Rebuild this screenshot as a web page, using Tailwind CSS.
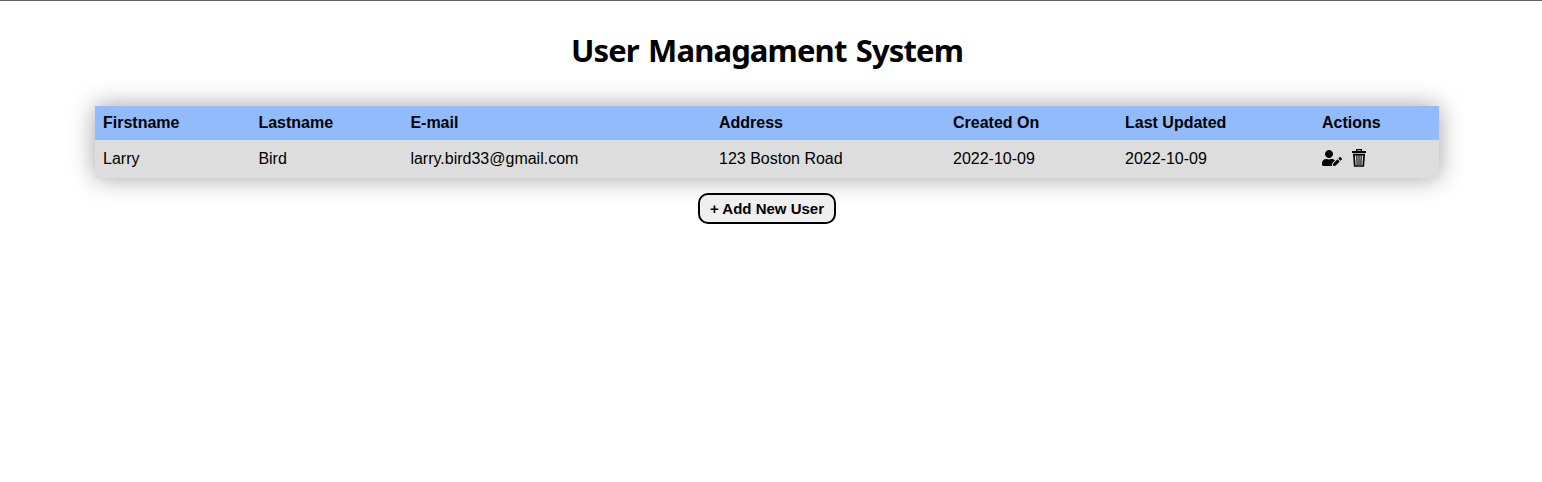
<!DOCTYPE html>
<html lang="en">
<head>
<meta charset="utf-8">
<title>User Managament System</title>
<script src="https://cdn.jsdelivr.net/npm/@tailwindcss/browser@4"></script>
</head>
<body class="bg-white text-black font-['Liberation_Sans',Arial,sans-serif] border-t border-[#606065] h-[482px] overflow-hidden">
<main class="w-[1344px] ml-[95px] flex flex-col items-center">
<h1 class="mt-[28px] h-[44px] leading-[43px] text-[31px] tracking-[-0.86px] [word-spacing:2px] font-bold font-['Noto_Sans',sans-serif] whitespace-nowrap">User Managament System</h1>
<table class="mt-[33px] w-[1344px] table-fixed border-collapse text-left text-base shadow-[0_0_25px_rgba(0,0,0,0.38)]">
<colgroup><col class="w-[155.400px]"><col class="w-[152px]"><col class="w-[308.600px]"><col class="w-[234px]"><col class="w-[172px]"><col class="w-[197px]"><col class="w-[125px]"></colgroup>
<thead><tr class="h-[34px] bg-[#91bbfa]">
<th class="px-2 py-0">Firstname</th><th class="px-2 py-0">Lastname</th><th class="px-2 py-0">E-mail</th><th class="px-2 py-0">Address</th><th class="px-2 py-0">Created On</th><th class="px-2 py-0">Last Updated</th><th class="px-2 py-0">Actions</th></tr></thead>
<tbody><tr class="h-[38px] bg-[#dddddd]">
<td class="px-2 py-0">Larry</td><td class="px-2 py-0">Bird</td><td class="px-2 py-0">larry.bird33@gmail.com</td><td class="px-2 py-0">123 Boston Road</td><td class="px-2 py-0">2022-10-09</td><td class="px-2 py-0">2022-10-09</td>
<td class="px-2 py-0"><div class="flex items-center gap-[10px] pb-[2px]">
<svg class="w-5 h-4" viewBox="0 0 640 512" fill="currentColor"><path d="M224 256c70.700 0 128-57.300 128-128S294.700 0 224 0 96 57.300 96 128s57.300 128 128 128zm89.600 32h-16.700c-22.200 10.200-46.900 16-72.900 16s-50.600-5.800-72.900-16h-16.700C60.200 288 0 348.200 0 422.400V464c0 26.500 21.500 48 48 48h274.900c-2.400-6.800-3.400-14-2.600-21.300l6.800-60.900 1.200-11.100 7.900-7.900 77.300-77.300c-24.500-27.700-60-45.500-99.900-45.500zm45.300 145.300l-6.800 61c-1.100 10.200 7.500 18.800 17.600 17.600l60.900-6.800 137.900-137.900-71.700-71.700-137.900 137.800zM633 268.900L595.100 231c-9.300-9.300-24.500-9.300-33.800 0l-37.800 37.800-4.100 4.100 71.800 71.700 41.800-41.800c9.300-9.400 9.300-24.500 0-33.900z"/></svg>
<svg class="w-[14px] h-[18px]" viewBox="0 0 14 18" fill="none" stroke="currentColor"><path d="M0 3h14" stroke-width="2"/><path d="M4.600 2.500V.7h4.800v1.800" stroke-width="1.200"/><path d="M1.900 5.600l.8 11.400h8.600l.8-11.400z" stroke-width="1.700"/><path d="M4.800 6l.3 10M7 6v10M9.200 6l-.3 10" stroke-width="1.100"/></svg>
</div></td></tr></tbody></table>
<button class="mt-[15px] w-[138px] h-[31px] pt-px rounded-[10px] border-2 border-black bg-[#efefef] text-[15px] font-bold whitespace-nowrap">+ Add New User</button>
</main>
</body>
</html>
